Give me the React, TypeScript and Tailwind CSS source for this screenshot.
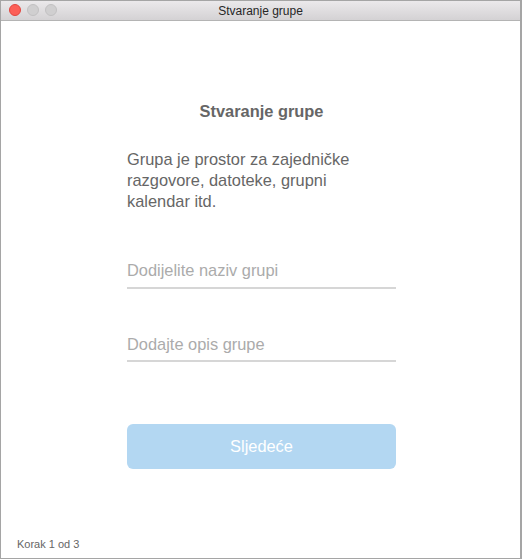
import React from 'react';

export default function App() {
  return (
    <div className="w-[522px] h-[559px] bg-white border border-[#a5a5a5] border-r-2 flex flex-col overflow-hidden font-['Liberation_Sans',Arial,sans-serif]">
      {/* title bar */}
      <div className="relative h-[20px] shrink-0 bg-gradient-to-b from-[#ebe9eb] to-[#d4d2d4] border-b border-[#b4b4b4] flex items-center justify-center">
        <div className="absolute left-[8px] top-[3px] flex gap-[6px]">
          <span className="w-[12px] h-[12px] rounded-full bg-[#fc5f57] border border-[#e2463f]" />
          <span className="w-[12px] h-[12px] rounded-full bg-[#d0cfd0] border border-[#c2c1c2]" />
          <span className="w-[12px] h-[12px] rounded-full bg-[#d0cfd0] border border-[#c2c1c2]" />
        </div>
        <span className="text-[12px] text-[#262626] leading-none">Stvaranje grupe</span>
      </div>

      <main className="flex-1 flex flex-col">
        <div className="w-[269px] ml-[126px] pt-[80px] flex flex-col">
          <h1 className="text-center text-[16.4px] leading-[20px] font-bold text-[#666666]">Stvaranje grupe</h1>
          <p className="mt-[28px] w-[250px] text-[16.4px] leading-[21px] text-[#666666]">
            Grupa je prostor za zajedničke razgovore, datoteke, grupni kalendar itd.
          </p>

          <input
            type="text"
            placeholder="Dodijelite naziv grupi"
            className="mt-[48px] w-full text-[16.4px] leading-[21px] h-[21px] box-content pb-[6px] border-b-2 border-[#d6d6d6] outline-none placeholder:text-[#ababab] text-[#666666]"
          />
          <input
            type="text"
            placeholder="Dodajte opis grupe"
            className="mt-[45px] w-full text-[16.4px] leading-[21px] h-[21px] box-content pb-[5px] border-b-2 border-[#d6d6d6] outline-none placeholder:text-[#ababab] text-[#666666]"
          />

          <button className="mt-[62px] h-[45px] w-full rounded-[6px] bg-[#b3d7f2] text-white text-[16.4px]">
            Sljedeće
          </button>
        </div>

        <div className="mt-auto pl-[16px] pb-[7px] text-[11px] leading-[14px] text-[#666666]">Korak 1 od 3</div>
      </main>
    </div>
  );
}
